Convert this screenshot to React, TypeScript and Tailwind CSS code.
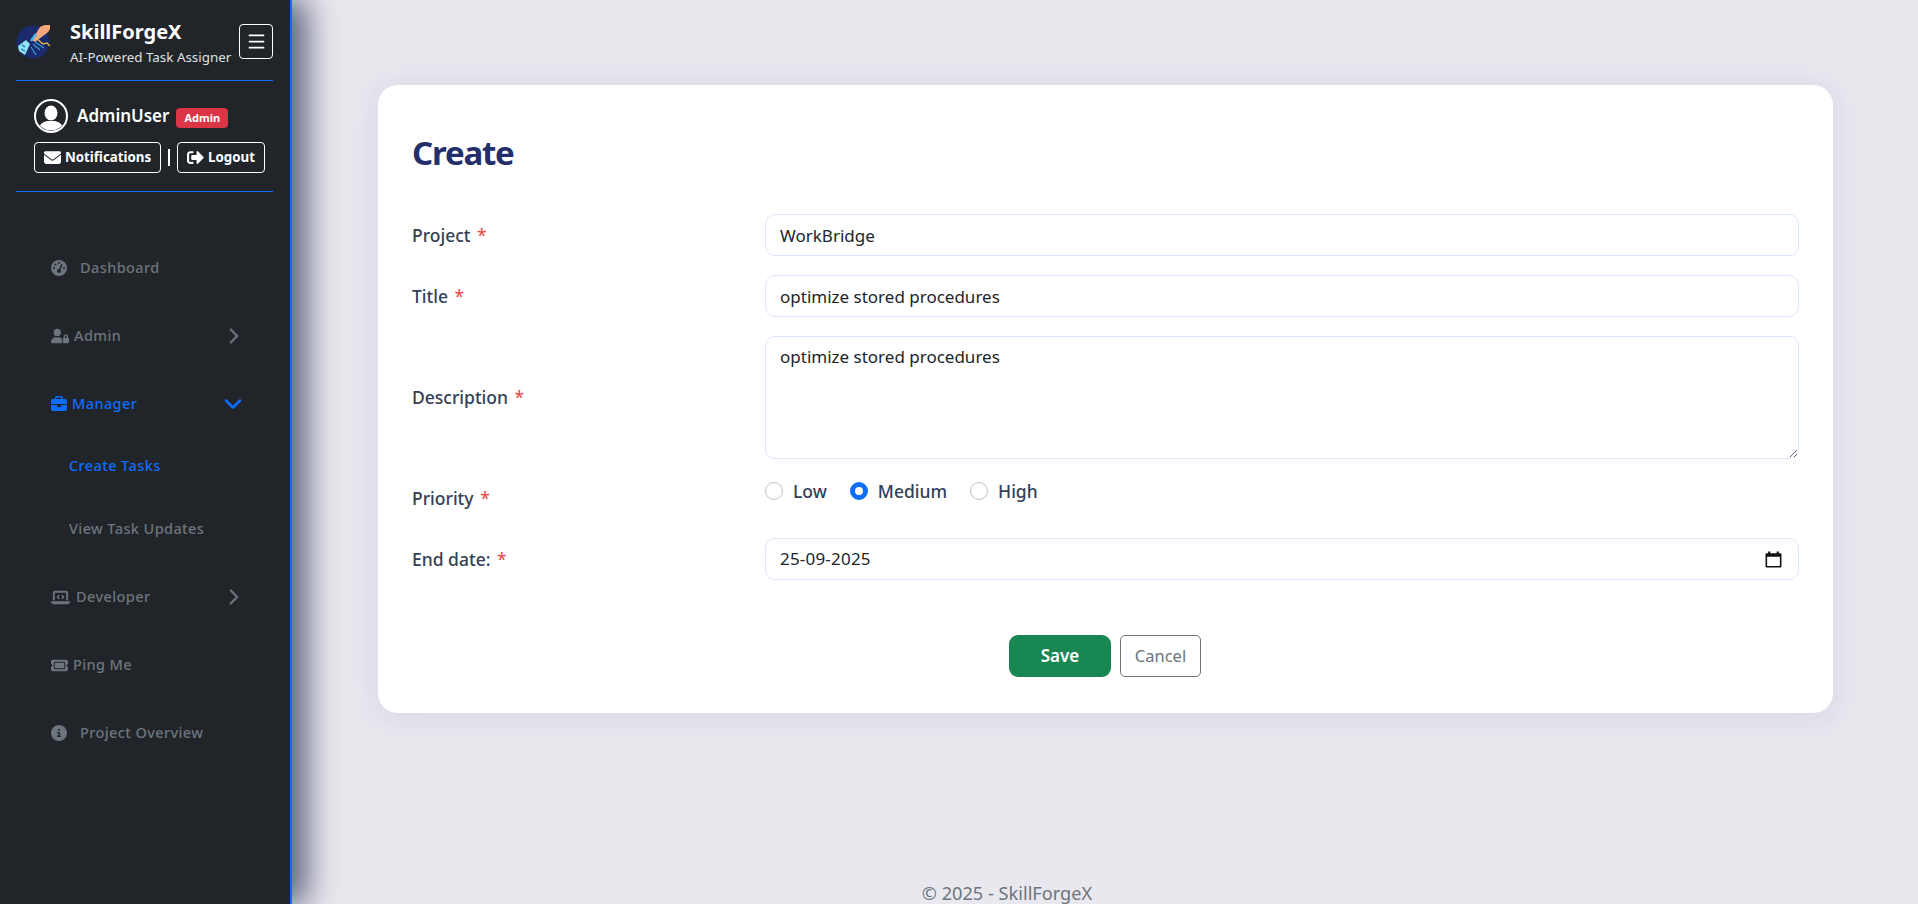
import { ChevronDown, ChevronRight, Menu } from "lucide-react"
import { FaSignOutAlt } from "react-icons/fa"
import {
  FaBriefcase,
  FaCircleInfo,
  FaEnvelope,
  FaGaugeHigh,
  FaLaptopCode,
  FaTicket,
  FaUserLock,
} from "react-icons/fa6"

function Logo() {
  return (
    <svg viewBox="0 0 34 34" className="mt-[5px] h-[34px] w-[34px] shrink-0">
      <circle cx="17" cy="17" r="16.5" fill="#1b2a6b" />
      <path d="M16 15 L24 2 Q29 -1 34 0 Q35 5 31 8 L19 17 Z" fill="#f4a67e" />
      <path d="M15 16 L20 9" stroke="#4fb3ee" strokeWidth="2.5" />
      <path d="M2 21 L10 15 L14 19 L9 30 L3 26 Z" fill="#8fe3f5" />
      <path d="M6 20 L9 22 M5 24 L9 26" stroke="#1b6fb8" strokeWidth="1.2" />
      <path d="M21 14 L27 19 L31 18 L34 21" fill="none" stroke="#f0c23c" strokeWidth="1.2" />
      <path d="M17 19 L24 25 M15 22 L20 30 M19 17 L28 23" fill="none" stroke="#39a0dc" strokeWidth="1.1" />
    </svg>
  )
}

function Avatar() {
  return (
    <svg viewBox="0 0 34 34" className="h-[34px] w-[34px] shrink-0">
      <clipPath id="avatarClip">
        <circle cx="17" cy="17" r="14.5" />
      </clipPath>
      <circle cx="17" cy="17" r="16" fill="none" stroke="#fff" strokeWidth="2" />
      <g clipPath="url(#avatarClip)" fill="#fff">
        <ellipse cx="17" cy="14" rx="6.5" ry="7.5" />
        <path d="M3 34 Q4 24 13 22 L21 22 Q30 24 31 34 Z" />
      </g>
    </svg>
  )
}

function NavRow({ icon, label, gap, active, chevron }: { icon: React.ReactNode; label: string; gap: string; active?: boolean; chevron?: "right" | "down" }) {
  return (
    <div className={`flex h-[68px] items-center pl-[51px] pr-[43px] ${active ? "text-[#0d6efd]" : "text-[#6c757d]"}`}>
      <span className={`flex items-center ${gap}`}>
        {icon}
        <span className="text-[14.5px] font-medium tracking-[0.4px]">{label}</span>
      </span>
      {chevron === "right" && <ChevronRight className="ml-auto h-[26px] w-[26px]" strokeWidth={2} />}
      {chevron === "down" && <ChevronDown className="ml-auto h-[28px] w-[28px]" strokeWidth={2.2} />}
    </div>
  )
}

function Sidebar() {
  return (
    <aside className="z-10 flex h-full w-[292px] shrink-0 flex-col border-r-2 border-[#0d6efd] bg-[#212529] shadow-[14px_0_30px_rgba(33,37,80,0.7),0_0_60px_rgba(33,37,80,0.06)]">
      <div className="ml-4 mr-[17px] flex items-start justify-between border-b border-[#0d6efd] pb-[14px] pt-5">
        <div className="flex gap-[20px]">
          <Logo />
          <div>
            <div className="text-[20px] font-bold leading-6 text-white">SkillForgeX</div>
            <div className="mt-1 whitespace-nowrap text-[13.4px] leading-[18px] text-[#dee2e6]">AI-Powered Task Assigner</div>
          </div>
        </div>
        <button className="mt-1 flex h-[35px] w-[34px] items-center justify-center rounded-[4px] border border-white text-white">
          <Menu className="h-[21px] w-[21px]" strokeWidth={2} />
        </button>
      </div>

      <div className="ml-4 mr-[17px] border-b border-[#0d6efd] pb-[18px] pl-[18px] pt-[18px]">
        <div className="flex items-center">
          <Avatar />
          <span className="ml-[9px] text-[17px] font-semibold leading-6 text-white">AdminUser</span>
          <span className="ml-[7px] mt-[3px] rounded-[4px] bg-[#dc3545] px-[8px] py-[3px] text-[11px] font-bold leading-[14px] text-white">Admin</span>
        </div>
        <div className="mt-[9px] flex items-center text-white">
          <button className="flex h-[31px] w-[127px] items-center justify-center gap-[4px] rounded-[4px] border border-white text-[13.3px] font-bold">
            <FaEnvelope className="text-[17px]" /> Notifications
          </button>
          <span className="mx-[7px] h-[17px] w-[2px] bg-white" />
          <button className="flex h-[31px] w-[88px] items-center justify-center gap-[4px] rounded-[4px] border border-white text-[13.3px] font-bold">
            <FaSignOutAlt className="text-[17px]" /> Logout
          </button>
        </div>
      </div>

      <nav className="mt-[42px]">
        <NavRow icon={<FaGaugeHigh className="text-[16px]" />} label="Dashboard" gap="gap-[13px]" />
        <NavRow icon={<FaUserLock className="text-[18px]" />} label="Admin" gap="gap-[5px]" chevron="right" />
        <NavRow icon={<FaBriefcase className="text-[16px]" />} label="Manager" gap="gap-[5px]" active chevron="down" />
        <div className="-mt-[3px] mb-[3px] pl-[69px] text-[14.5px] font-medium tracking-[0.4px]">
          <div className="flex h-[62px] items-center text-[#0d6efd]">Create Tasks</div>
          <div className="flex h-[63px] items-center text-[#6c757d]">View Task Updates</div>
        </div>
        <NavRow icon={<FaLaptopCode className="text-[19px]" />} label="Developer" gap="gap-[6px]" chevron="right" />
        <NavRow icon={<FaTicket className="text-[17px]" />} label="Ping Me" gap="gap-[5px]" />
        <NavRow icon={<FaCircleInfo className="text-[16px]" />} label="Project Overview" gap="gap-[13px]" />
      </nav>
    </aside>
  )
}

function Label({ text }: { text: string }) {
  return (
    <label className="text-[17.5px] font-medium text-[#344055]">
      {text} <span className="ml-[2px] font-normal text-[#ef4444]">*</span>
    </label>
  )
}

function Radio({ label, checked }: { label: string; checked?: boolean }) {
  return (
    <span className="flex items-center gap-[10px]">
      <span className={`h-[18px] w-[18px] rounded-full ${checked ? "border-[5px] border-[#0d6efd] bg-white" : "border border-[#bfc4ca] bg-white"}`} />
      <span className="text-[17.5px] font-medium text-[#344055]">{label}</span>
    </span>
  )
}

const fieldClass = "h-[42px] w-full rounded-[10px] border border-[#dce8fb] bg-white px-[14px] text-[17px] text-[#212529] outline-none"

export default function App() {
  return (
    <div className="flex h-[904px] w-full overflow-hidden bg-[#e9e8ee] font-['Noto_Sans','Open_Sans',sans-serif]">
      <Sidebar />
      <main className="flex min-w-0 flex-1 flex-col pl-[86px] pr-[85px] pt-[85px]">
        <div className="rounded-[20px] bg-white px-[34px] pb-[36px] pt-[43px] shadow-[0_4px_28px_6px_rgba(60,70,190,0.08)]">
          <h2 className="h-[50px] text-[33px] font-bold leading-[50px] tracking-[-1.2px] text-[#232f6b]">Create</h2>
          <form className="mt-[36px] flex flex-col gap-[19px]">
            <div className="grid grid-cols-[353px_1fr] items-center">
              <Label text="Project" />
              <input className={fieldClass} defaultValue="WorkBridge" />
            </div>
            <div className="grid grid-cols-[353px_1fr] items-center">
              <Label text="Title" />
              <input className={fieldClass} defaultValue="optimize stored procedures" />
            </div>
            <div className="grid grid-cols-[353px_1fr] items-center">
              <Label text="Description" />
              <textarea className="block h-[123px] w-full rounded-[10px] border border-[#dce8fb] bg-white px-[14px] py-[7px] text-[17px] text-[#212529] outline-none" defaultValue="optimize stored procedures" />
            </div>
            <div className="grid h-[41px] grid-cols-[353px_1fr] items-center">
              <Label text="Priority" />
              <div className="-mt-[15px] flex items-center gap-[23px]">
                <Radio label="Low" />
                <Radio label="Medium" checked />
                <Radio label="High" />
              </div>
            </div>
            <div className="grid grid-cols-[353px_1fr] items-center">
              <Label text="End date:" />
              <div className={`flex items-center justify-between ${fieldClass}`}>
                <span className="tracking-[0.2px]">25-09-2025</span>
                <svg viewBox="0 0 16 16" className="mr-[2px] h-[17px] w-[17px]">
                  <path d="M3 0.5h2v1.5h6V0.5h2v1.5h1.5a1 1 0 0 1 1 1v11.5a1 1 0 0 1-1 1h-13a1 1 0 0 1-1-1V3a1 1 0 0 1 1-1H3z M2 5.5V14h12V5.5z" fill="#111" fillRule="evenodd" />
                </svg>
              </div>
            </div>
            <div className="mt-[36px] flex justify-center gap-[9px] pr-[1px]">
              <button type="button" className="h-[42px] w-[102px] rounded-[9px] bg-[#198754] text-[17px] font-semibold text-white">Save</button>
              <button type="button" className="h-[42px] w-[81px] rounded-[5px] border border-[#6c757d] bg-white text-[16.5px] text-[#6c757d]">Cancel</button>
            </div>
          </form>
        </div>
        <footer className="mt-auto flex h-5 items-center justify-center pr-[197px] text-[18.2px] text-[#6c757d]">© 2025 - SkillForgeX</footer>
      </main>
    </div>
  )
}
